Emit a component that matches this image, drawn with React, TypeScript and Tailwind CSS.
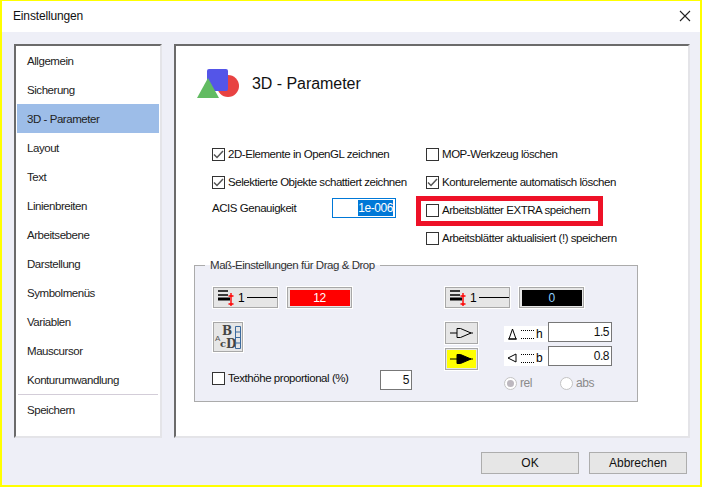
import type { ReactNode } from 'react';

const menuItems = [
  'Allgemein',
  'Sicherung',
  '3D - Parameter',
  'Layout',
  'Text',
  'Linienbreiten',
  'Arbeitsebene',
  'Darstellung',
  'Symbolmenüs',
  'Variablen',
  'Mauscursor',
  'Konturumwandlung',
];

function CheckBox({ label, checked = false }: { label: string; checked?: boolean }) {
  return (
    <div className="flex items-center h-[28px] text-[#111]">
      <span className="flex items-center justify-center w-[13px] h-[13px] border border-[#333] bg-white">
        {checked && (
          <svg width="11" height="11" viewBox="0 0 11 11" fill="none">
            <path d="M1 5.5 L4 8.5 L10 2" stroke="#555" strokeWidth="1.5" />
          </svg>
        )}
      </span>
      <span className="ml-[3px] mt-px whitespace-nowrap">{label}</span>
    </div>
  );
}

function RaisedButton({ className, children }: { className: string; children: ReactNode }) {
  return (
    <div className={`flex items-center justify-center border-2 border-white outline outline-1 -outline-offset-2 outline-[#a8a8a8] bg-[#e6e6e6] ${className}`}>
      {children}
    </div>
  );
}

function LineStyleButton() {
  return (
    <RaisedButton className="w-[67px] h-[23px] !justify-start pl-[2px]">
      <svg width="20" height="19" viewBox="0 0 20 19" className="shrink-0">
        <path d="M2 3H12M2 7H12" stroke="#000" strokeWidth="1.3" />
        <path d="M2 11H14" stroke="#000" strokeWidth="3" />
        <path d="M15 5V18M12.500 8H17.500M12.500 16H17.500" stroke="#f00" strokeWidth="1.4" />
      </svg>
      <span className="ml-[2px] text-[12px] leading-none text-black">1</span>
      <span className="ml-[3px] w-[30px] h-px bg-black" />
    </RaisedButton>
  );
}

function ColorField({ color, value, text }: { color: string; value: string; text: string }) {
  return (
    <div className="flex items-center justify-center w-[67px] h-[23px] border-2 border-white outline outline-1 -outline-offset-2 outline-[#a8a8a8] bg-[#e6e6e6]">
      <div className={`flex items-center justify-center w-[60px] h-[16px] text-[12px] ${color} ${text}`}>{value}</div>
    </div>
  );
}

function NumberField({ value, className }: { value: string; className: string }) {
  return (
    <div className={`flex items-center justify-end pr-[2px] bg-white border border-[#777] text-[12px] text-[#111] ${className}`}>
      {value}
    </div>
  );
}

function ArrowIcon({ filled }: { filled?: boolean }) {
  return (
    <svg width="24" height="12" viewBox="0 0 24 12" fill="none">
      <path d="M0 6H7M20 6H23" stroke="#000" strokeWidth="1.2" />
      <path d="M7 1.500H10.500L21 6L10.500 10.500H7Z" stroke="#000" fill={filled ? '#000' : 'none'} strokeWidth="1" />
    </svg>
  );
}

function Radio({ label, selected, className }: { label: string; selected?: boolean; className: string }) {
  return (
    <div className={`flex items-center text-[12px] text-[#8a8a8a] ${className}`}>
      <span className="flex items-center justify-center w-[13px] h-[13px] rounded-full border border-[#c4c4c4] bg-white">
        {selected && <span className="w-[7px] h-[7px] rounded-full bg-[#bdb8bf]" />}
      </span>
      <span className="ml-[3px]">{label}</span>
    </div>
  );
}

function DotLines() {
  return <span className="w-[13px] h-[9px] border-y border-dotted border-black" />;
}

export default function App() {
  return (
    <div className="relative w-[703px] h-[487px] bg-white font-['Liberation_Sans',Arial,sans-serif] text-[11.5px] tracking-[-0.45px] overflow-hidden">
      <div className="flex flex-col w-[702px] h-[487px] border-t border-l-2 border-r-2 border-b-2 border-[#ffff00] bg-[#eeeff7]">
        {/* Title bar */}
        <div className="flex items-center justify-between h-[31px] shrink-0 bg-white pl-[11px] pr-[9px] pb-[1px]">
          <span className="text-[12px] tracking-[-0.15px] text-[#111]">Einstellungen</span>
          <svg width="12" height="12" viewBox="0 0 12 12" fill="none">
            <path d="M1 1L11 11M11 1L1 11" stroke="#222" strokeWidth="1.1" />
          </svg>
        </div>

        <div className="flex items-start pl-[12px] pt-[12px]">
          {/* Category list */}
          <div className="w-[148px] h-[394px] shrink-0 bg-white border-2 border-t-[#6b6b6b] border-l-[#6b6b6b] border-r-[#e4e4e8] border-b-[#e4e4e8] pl-px pr-px text-[#222]">
            {menuItems.map((item) => (
              <div
                key={item}
                className={`flex items-center h-[29px] pl-[10px] pt-[2px] ${item === '3D - Parameter' ? 'bg-[#9dbde8]' : ''}`}
              >
                {item}
              </div>
            ))}
            <div className="h-px mx-px bg-[#d3cdd8]" />
            <div className="flex items-center h-[29px] pl-[10px] pt-[2px]">Speichern</div>
          </div>

          {/* Parameter page */}
          <div className="ml-[12px] w-[516px] h-[394px] shrink-0 bg-white border-2 border-t-[#6b6b6b] border-l-[#6b6b6b] border-r-[#e4e4e8] border-b-[#e4e4e8]">
            <div className="flex items-center pl-[21px] pt-[22px]">
              <svg width="44" height="31" viewBox="0 0 44 31">
                <circle cx="31" cy="18" r="11" fill="#e84242" />
                <rect x="10" y="1" width="21" height="22" rx="2" fill="#5455e8" />
                <path d="M11 10L22 30H0Z" fill="#62bb62" />
              </svg>
              <span className="ml-[11px] mt-[1px] text-[16px] tracking-[-0.05px] text-[#111]">3D - Parameter</span>
            </div>

            <div className="flex mt-[41px] pl-[36px]">
              <div className="w-[214px]">
                <CheckBox label="2D-Elemente in OpenGL zeichnen" checked />
                <CheckBox label="Selektierte Objekte schattiert zeichnen" checked />
                <div className="flex items-center h-[24px] text-[#111]">
                  <span className="w-[120px] mt-px">ACIS Genauigkeit</span>
                  <div className="flex items-center justify-end w-[64px] h-[20px] pr-[2px] border border-[#0078d7] bg-white">
                    <span className="bg-[#0078d7] text-white leading-[16px] text-[12px]">1e-006</span>
                  </div>
                </div>
              </div>
              <div>
                <CheckBox label="MOP-Werkzeug löschen" />
                <CheckBox label="Konturelemente automatisch löschen" checked />
                <div className="relative">
                  <CheckBox label="Arbeitsblätter EXTRA speichern" />
                  <div className="absolute -left-[10px] top-0 w-[187px] h-[30px] border-[5px] border-[#ee1127] pointer-events-none" />
                </div>
                <CheckBox label="Arbeitsblätter aktualisiert (!) speichern" />
              </div>
            </div>

            {/* Drag & drop group */}
            <fieldset className="ml-[18px] mt-[6px] w-[444px] h-[144px] border border-[#ababab] bg-[#eeeff7] px-[17px]">
              <legend className="-ml-[7px] px-[5px] leading-[14px] text-[#333]">Maß-Einstellungen für Drag &amp; Drop</legend>
              <div className="flex mt-[14px]">
                <div className="w-[232px]">
                  <div className="flex gap-[7px]">
                    <LineStyleButton />
                    <ColorField color="bg-[#ff0000]" value="12" text="text-white" />
                  </div>
                  <RaisedButton className="w-[32px] h-[32px] mt-[12px]">
                    <svg width="28" height="28" viewBox="0 0 28 28" fontFamily="DejaVu Serif, serif" fontWeight="700">
                      <text x="1" y="18" fontSize="8" fontWeight="400" fontFamily="Liberation Sans, sans-serif" fill="#555">A</text>
                      <text x="8" y="12" fontSize="12" fill="#444">B</text>
                      <text x="6" y="24" fontSize="10" fill="#444">c</text>
                      <text x="12" y="25" fontSize="12" fill="#444">D</text>
                      <path d="M21.500 3.500H26.500V25.500H21.500ZM21.500 9H26.500M21.500 14.500H26.500M21.500 20H26.500" stroke="#3b6a9e" fill="none" strokeWidth="1" />
                    </svg>
                  </RaisedButton>
                  <div className="flex items-center mt-[11px]">
                    <div className="w-[168px]">
                      <CheckBox label="Texthöhe proportional (%)" />
                    </div>
                    <NumberField value="5" className="w-[32px] h-[20px] mt-[3px]" />
                  </div>
                </div>
                <div>
                  <div className="flex gap-[7px]">
                    <LineStyleButton />
                    <ColorField color="bg-black" value="0" text="text-[#8fd0ff]" />
                  </div>
                  <div className="flex mt-[12px]">
                    <div className="w-[60px]">
                      <RaisedButton className="w-[35px] h-[24px]">
                        <ArrowIcon />
                      </RaisedButton>
                      <RaisedButton className="w-[35px] h-[24px] mt-[2px]">
                        <div className="flex items-center justify-center w-[29px] h-[18px] bg-[#ffff00]">
                          <ArrowIcon filled />
                        </div>
                      </RaisedButton>
                    </div>
                    <div className="mt-px">
                      <div className="flex items-end h-[20px]">
                        <div className="flex items-center w-[44px] h-[16px] bg-white text-[12px] leading-none text-black pl-[3px]">
                          <svg width="11" height="12" viewBox="0 0 11 12" fill="none" className="mr-[3px] shrink-0">
                            <path d="M5.500 1L2 11H9ZM1 11H10" stroke="#000" strokeWidth="1" />
                          </svg>
                          <DotLines />
                          <span className="ml-[2px]">h</span>
                        </div>
                        <NumberField value="1.5" className="w-[64px] h-[20px]" />
                      </div>
                      <div className="flex items-end h-[20px] mt-[4px]">
                        <div className="flex items-center w-[44px] h-[16px] bg-white text-[12px] leading-none text-black pl-[3px]">
                          <svg width="11" height="12" viewBox="0 0 11 12" fill="none" className="mr-[3px] shrink-0">
                            <path d="M1 6L9 2V10Z" stroke="#000" strokeWidth="1" />
                          </svg>
                          <DotLines />
                          <span className="ml-[2px]">b</span>
                        </div>
                        <NumberField value="0.8" className="w-[64px] h-[20px]" />
                      </div>
                      <div className="flex h-[20px] mt-[7px]">
                        <Radio label="rel" selected className="w-[56px]" />
                        <Radio label="abs" className="w-[50px]" />
                      </div>
                    </div>
                  </div>
                </div>
              </div>
            </fieldset>
          </div>
        </div>

        {/* Dialog buttons */}
        <div className="flex justify-end gap-[10px] pr-[13px] mt-[14px] text-[12px] tracking-normal text-[#111]">
          <div className="flex items-center justify-center w-[98px] h-[22px] border border-[#adadad] bg-[#e6e6e6]">OK</div>
          <div className="flex items-center justify-center w-[98px] h-[22px] border border-[#adadad] bg-[#e6e6e6]">Abbrechen</div>
        </div>
      </div>
    </div>
  );
}
